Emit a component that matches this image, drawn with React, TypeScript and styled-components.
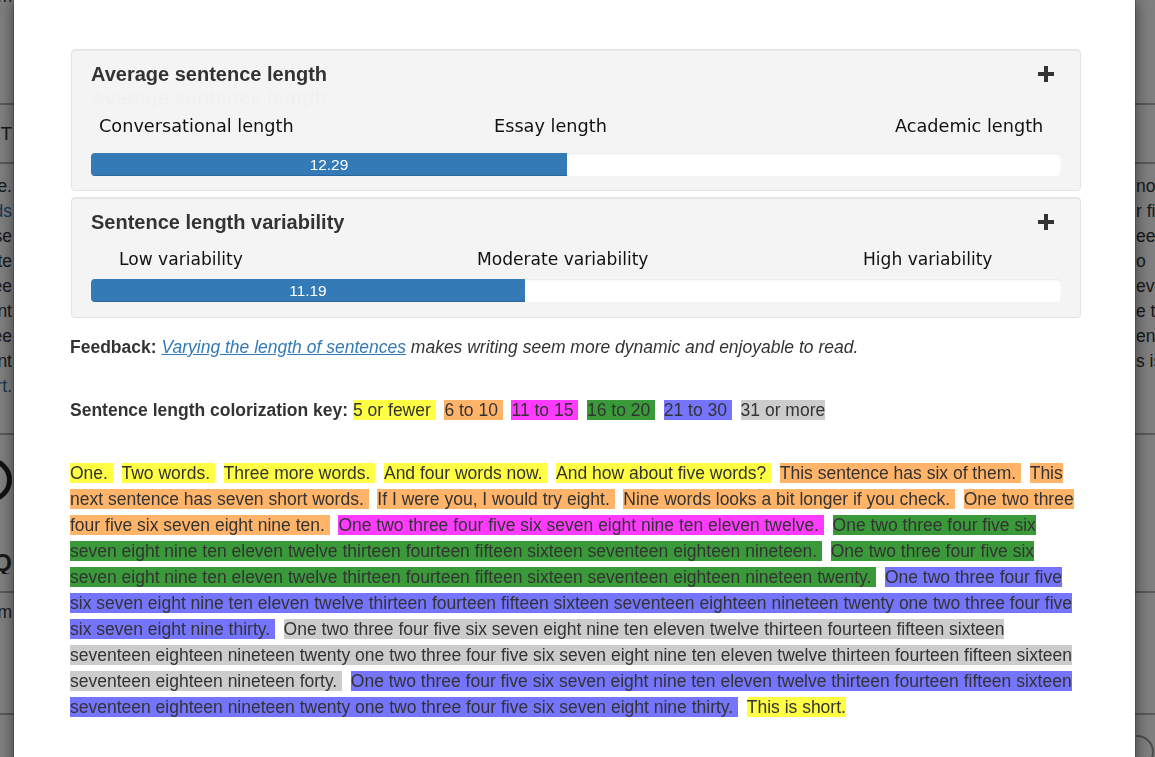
import React from "react";
import styled, { createGlobalStyle } from "styled-components";

const GlobalStyle = createGlobalStyle`
  html, body { margin: 0; padding: 0; }
  body {
    width: 1155px;
    height: 757px;
    overflow: hidden;
    background: #fff;
    font-family: "Liberation Sans", Arial, Helvetica, sans-serif;
    color: #333;
  }
`;

/* ---------- page behind the dialog ---------- */

const BgPage = styled.div`
  height: 757px;
  overflow: hidden;
  display: flex;
  flex-direction: column;
  font-size: 17.5px;
  color: #333;
`;

const BgRow = styled.div<{ $h: number; $rule?: boolean; $align?: string }>`
  flex: none;
  box-sizing: border-box;
  height: ${(p) => p.$h}px;
  display: grid;
  grid-template-columns: 13px 1fr 19px;
  align-items: ${(p) => p.$align || "center"};
  border-top: ${(p) => (p.$rule ? "2px solid #b4b4b4" : "0")};
  line-height: 22px;
`;

const BgLeft = styled.div<{ $link?: boolean; $bold?: boolean; $size?: number; $shift?: number }>`
  overflow: hidden;
  white-space: nowrap;
  display: flex;
  justify-content: flex-end;
  padding-right: 1px;
  color: ${(p) => (p.$link ? "#2f6fa8" : "#333")};
  font-weight: ${(p) => (p.$bold ? 700 : 400)};
  font-size: ${(p) => p.$size || 17.5}px;
  transform: translateY(${(p) => p.$shift || 0}px);
`;

const BgRight = styled.div`
  overflow: hidden;
  white-space: nowrap;
  color: #333;
`;

const BgRing = styled.div`
  flex: none;
  width: 34px;
  height: 34px;
  border-radius: 50%;
  border: 5px solid #222;
`;

const BgRoundButton = styled.div`
  width: 30px;
  height: 30px;
  margin: 20px 0 0 -16px;
  border-radius: 50%;
  border: 2px solid #9a9a9a;
`;

const Backdrop = styled.div`
  position: fixed;
  inset: 0;
  background: rgba(0, 0, 0, 0.5);
`;

/* ---------- dialog ---------- */

const Dialog = styled.div`
  position: fixed;
  left: 13px;
  top: -6px;
  width: 1123px;
  bottom: -40px;
  box-sizing: border-box;
  background: #fff;
  background-clip: padding-box;
  border: 1px solid rgba(0, 0, 0, 0.2);
  border-radius: 6px;
  box-shadow: 0 5px 15px rgba(0, 0, 0, 0.5);
  padding: 54px 54px 0 56px;
  font-size: 17.5px;
  color: #333;
`;

const Well = styled.section<{ $pb: number; $mb: number }>`
  margin: 0 0 ${(p) => p.$mb}px 1px;
  background: #f4f4f4;
  border: 1px solid #e3e3e3;
  border-radius: 4px;
  box-shadow: inset 0 1px 1px rgba(0, 0, 0, 0.05);
  padding: 12px 19px ${(p) => p.$pb}px;
`;

const WellHead = styled.div`
  display: flex;
  justify-content: space-between;
  align-items: center;
  height: 24px;
`;

const WellTitle = styled.h4`
  margin: 0;
  font-size: 20px;
  font-weight: 700;
  line-height: 24px;
  color: #333;
`;

const GhostTitle = styled.div`
  height: 24px;
  line-height: 24px;
  font-size: 20px;
  font-weight: 700;
  color: #f1f1f1;
`;

const ExpandIcon = styled.svg`
  flex: none;
  margin-right: 7px;
`;

const Scale = styled.div<{ $cols: string; $pl: number; $mt: number; $fs: number }>`
  display: grid;
  grid-template-columns: ${(p) => p.$cols};
  padding-left: ${(p) => p.$pl}px;
  margin-top: ${(p) => p.$mt}px;
  font-family: "DejaVu Sans", Verdana, sans-serif;
  font-size: ${(p) => p.$fs}px;
  line-height: 22px;
  color: #111;
  white-space: nowrap;
`;

const Track = styled.div<{ $mt: number }>`
  margin-top: ${(p) => p.$mt}px;
  height: 23px;
  background: #fff;
  border-radius: 4px;
  overflow: hidden;
  box-shadow: inset 0 1px 2px rgba(0, 0, 0, 0.1);
`;

const Fill = styled.div`
  height: 100%;
  background: #337ab7;
  color: #fff;
  text-align: center;
  font-size: 15.4px;
  line-height: 23px;
  box-shadow: inset 0 -1px 0 rgba(0, 0, 0, 0.15);
`;

const Prose = styled.p<{ $mt: number }>`
  margin: ${(p) => p.$mt}px 0 0;
  line-height: 26px;
  font-size: 17.5px;
  color: #333;
`;

const Strong = styled.b`
  font-weight: 700;
`;

const Em = styled.em`
  font-style: italic;
`;

const Link = styled.a`
  color: #337ab7;
  text-decoration: underline;
  font-style: italic;
`;

const Mark = styled.span<{ $c: string }>`
  background: ${(p) => p.$c};
  margin-right: 8.7px;
`;

/* ---------- data ---------- */

const COLORS = {
  yellow: "#ffff44",
  orange: "#ffb469",
  magenta: "#ff3bff",
  green: "#3a9a3a",
  blue: "#7474fc",
  gray: "#cccccc",
};

const colorFor = (n: number) =>
  n <= 5
    ? COLORS.yellow
    : n <= 10
    ? COLORS.orange
    : n <= 15
    ? COLORS.magenta
    : n <= 20
    ? COLORS.green
    : n <= 30
    ? COLORS.blue
    : COLORS.gray;

const NUM = [
  "one", "two", "three", "four", "five", "six", "seven", "eight", "nine", "ten",
  "eleven", "twelve", "thirteen", "fourteen", "fifteen", "sixteen", "seventeen",
  "eighteen", "nineteen", "twenty",
];

const count = (n: number) => NUM.slice(0, n);
const cap = (w: string[]) => [w[0][0].toUpperCase() + w[0].slice(1), ...w.slice(1)];

const SENTENCES: string[] = [
  "One.",
  "Two words.",
  "Three more words.",
  "And four words now.",
  "And how about five words?",
  "This sentence has six of them.",
  "This next sentence has seven short words.",
  "If I were you, I would try eight.",
  "Nine words looks a bit longer if you check.",
  cap(count(10)).join(" ") + ".",
  cap(count(12)).join(" ") + ".",
  cap(count(19)).join(" ") + ".",
  cap(count(20)).join(" ") + ".",
  cap([...count(20), ...count(9), "thirty"]).join(" ") + ".",
  cap([...count(20), ...count(19), "forty"]).join(" ") + ".",
  cap([...count(20), ...count(9), "thirty"]).join(" ") + ".",
  "This is short.",
];

const KEY = [
  { label: "5 or fewer", c: COLORS.yellow },
  { label: "6 to 10", c: COLORS.orange },
  { label: "11 to 15", c: COLORS.magenta },
  { label: "16 to 20", c: COLORS.green },
  { label: "21 to 30", c: COLORS.blue },
  { label: "31 or more", c: COLORS.gray },
];

const BG_LINES: { l: string; r: string; link?: boolean }[] = [
  { l: "e.", r: "nor" },
  { l: "ds", r: "r fi", link: true },
  { l: "se", r: "een" },
  { l: "ete", r: "o" },
  { l: "ee", r: "eve" },
  { l: "nt", r: "e tw" },
  { l: "ee", r: "en" },
  { l: "nt", r: "s is" },
  { l: "rt.", r: "", link: true },
];

type Metric = {
  title: string;
  labels: string[];
  cols: string;
  pl: number;
  fs: number;
  value: number;
  max: number;
  ghost?: boolean;
  labelTop: number;
  barTop: number;
  pb: number;
  mb: number;
};

const METRICS: Metric[] = [
  {
    title: "Average sentence length",
    labels: ["Conversational length", "Essay length", "Academic length"],
    cols: "395px 401px auto",
    pl: 8,
    fs: 17.7,
    value: 12.29,
    max: 25.05,
    ghost: true,
    labelTop: 5,
    barTop: 16,
    pb: 14,
    mb: 6,
  },
  {
    title: "Sentence length variability",
    labels: ["Low variability", "Moderate variability", "High variability"],
    cols: "358px 386px auto",
    pl: 28,
    fs: 17.1,
    value: 11.19,
    max: 25.01,
    labelTop: 14,
    barTop: 9,
    pb: 15,
    mb: 0,
  },
];

const PlusIcon = () => (
  <ExpandIcon width="16" height="16" viewBox="0 0 16 16" aria-hidden="true">
    <path d="M6 0h4v6h6v4h-6v6H6v-6H0V6h6z" fill="#333" />
  </ExpandIcon>
);

export default function App() {
  return (
    <>
      <GlobalStyle />
      <BgPage>
        <BgRow $h={10}>
          <BgLeft $shift={-9}>m</BgLeft>
          <span />
          <BgRight />
        </BgRow>
        <BgRow $h={93} />
        <BgRow $h={59} $rule>
          <BgLeft $size={19}>EXT</BgLeft>
          <span />
          <BgRight />
        </BgRow>
        <BgRow $h={11} $rule />
        {BG_LINES.map((row, i) => (
          <BgRow key={i} $h={25}>
            <BgLeft $link={row.link}>{row.l}</BgLeft>
            <span />
            <BgRight>{row.r}</BgRight>
          </BgRow>
        ))}
        <BgRow $h={35} />
        <BgRow $h={27} $rule />
        <BgRow $h={40}>
          <BgLeft>
            <BgRing />
          </BgLeft>
          <span />
          <BgRight />
        </BgRow>
        <BgRow $h={50} />
        <BgRow $h={26}>
          <BgLeft $bold $size={24}>Q</BgLeft>
          <span />
          <BgRight />
        </BgRow>
        <BgRow $h={15} />
        <BgRow $h={40} $rule>
          <BgLeft>m</BgLeft>
          <span />
          <BgRight />
        </BgRow>
        <BgRow $h={82} />
        <BgRow $h={44} $rule $align="start">
          <span />
          <span />
          <BgRight>
            <BgRoundButton />
          </BgRight>
        </BgRow>
      </BgPage>

      <Backdrop />

      <Dialog role="dialog">
        {METRICS.map((m) => (
          <Well key={m.title} $pb={m.pb} $mb={m.mb}>
            <WellHead>
              <WellTitle>{m.title}</WellTitle>
              <PlusIcon />
            </WellHead>
            {m.ghost && <GhostTitle aria-hidden="true">{m.title}</GhostTitle>}
            <Scale $cols={m.cols} $pl={m.pl} $mt={m.labelTop} $fs={m.fs}>
              {m.labels.map((l) => (
                <span key={l}>{l}</span>
              ))}
            </Scale>
            <Track $mt={m.barTop}>
              <Fill style={{ width: `${(m.value / m.max) * 100}%` }}>{m.value.toFixed(2)}</Fill>
            </Track>
          </Well>
        ))}

        <Prose $mt={16}>
          <Strong>Feedback:</Strong> <Link href="#">Varying the length of sentences</Link>{" "}
          <Em>makes writing seem more dynamic and enjoyable to read.</Em>
        </Prose>

        <Prose $mt={37}>
          <Strong>Sentence length colorization key:</Strong>{" "}
          {KEY.map((k) => (
            <Mark key={k.label} $c={k.c}>
              {k.label + " "}
            </Mark>
          ))}
        </Prose>

        <Prose $mt={37}>
          {SENTENCES.map((s, i) => (
            <Mark key={i} $c={colorFor(s.split(" ").length)}>
              {s + " "}
            </Mark>
          ))}
        </Prose>
      </Dialog>
    </>
  );
}
